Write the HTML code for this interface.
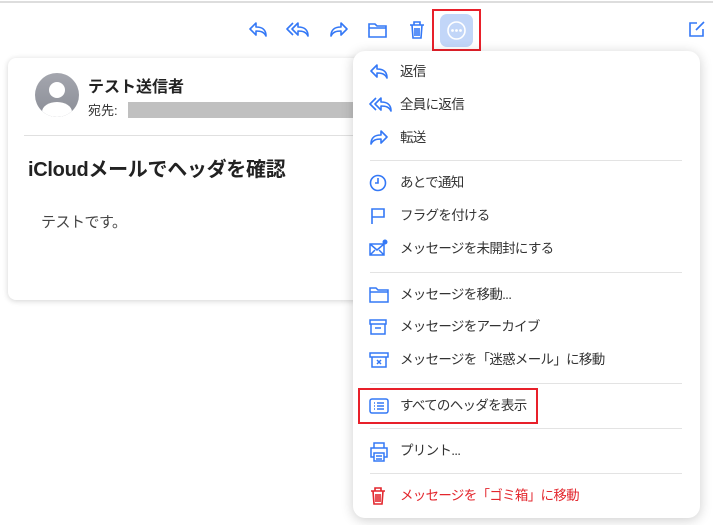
<!DOCTYPE html><html><head><meta charset="utf-8"><style>
body{margin:0;width:713px;height:525px;background:#fff;font-family:"Liberation Sans","Noto Sans CJK JP",sans-serif;position:relative;overflow:hidden;color:#222}
.a{position:absolute}
.ti{position:absolute;top:20px}
.card{left:8px;top:58px;width:370px;height:242px;background:#fff;border-radius:8px;box-shadow:0 1px 6px rgba(0,0,0,.18)}
.menu{left:353px;top:51px;width:347px;height:467px;background:#fff;border-radius:12px;box-shadow:0 2px 12px rgba(0,0,0,.2)}
.it{position:absolute;left:400px;font-size:13.5px;letter-spacing:-0.7px;color:#333;line-height:20px}
.ic{position:absolute;left:369px}
.sep{position:absolute;left:370px;width:312px;height:1px;background:#e3e3e3}
</style></head><body>
<div class="a" style="left:0;top:1px;width:713px;height:2px;background:#ddd"></div>
<svg class="ti" style="left:248px" width="20" height="20" viewBox="0 0 20 20" fill="none" stroke="#3478f6" stroke-width="1.6" stroke-linejoin="round"><path d="M8 3 2 9l6 6v-4c5 0 8 1 10 5 0-6-3-9-10-9z"/></svg>
<svg class="ti" style="left:286px" width="24" height="20" viewBox="0 0 24 20" fill="none" stroke="#3478f6" stroke-width="1.6" stroke-linejoin="round"><path d="M7 3 1 9l6 6"/><path d="M12 3 6 9l6 6v-4c5 0 8 1 10 5 0-6-3-9-10-9z"/></svg>
<svg class="ti" style="left:329px" width="20" height="20" viewBox="0 0 20 20" fill="none" stroke="#3478f6" stroke-width="1.6" stroke-linejoin="round"><path d="M12 3l6 6-6 6v-4c-5 0-8 1-10 5 0-6 3-9 10-9z"/></svg>
<svg class="ti" style="left:367px" width="21" height="20" viewBox="0 0 21 20" fill="none" stroke="#3478f6" stroke-width="1.6"><path d="M2 4h6l2 2h9v11H2z M2 8h17"/></svg>
<svg class="ti" style="left:408px" width="18" height="20" viewBox="0 0 18 20" fill="none" stroke="#3478f6" stroke-width="1.6"><path d="M2 5h14M6 5V2h6v3M4 5l1 13h8l1-13M7 8v8M9 8v8M11 8v8"/></svg>
<div class="a" style="left:432px;top:9px;width:45px;height:38px;border:2px solid #e8202a"></div>
<div class="a" style="left:440px;top:14px;width:33px;height:33px;background:#c2d6f8;border-radius:7px"></div>
<svg class="a" style="left:446px;top:20px" width="21" height="21" viewBox="0 0 21 21" fill="none" stroke="#fff" stroke-width="1.6"><circle cx="10.5" cy="10.5" r="8.5"/><circle cx="6.5" cy="10.5" r=".6" fill="#fff"/><circle cx="10.5" cy="10.5" r=".6" fill="#fff"/><circle cx="14.5" cy="10.5" r=".6" fill="#fff"/></svg>
<svg class="ti" style="left:688px" width="18" height="18" viewBox="0 0 18 18" fill="none" stroke="#3478f6" stroke-width="1.6"><path d="M9 3H2v13h13V9M8 10l8-8"/></svg>
<div class="a card">
<div class="a" style="left:27px;top:15px;width:44px;height:44px;border-radius:50%;background:linear-gradient(#a4a6ae,#8b8e97);overflow:hidden"><div class="a" style="left:14px;top:9px;width:16px;height:16px;border-radius:50%;background:#fff"></div><div class="a" style="left:7px;top:29px;width:30px;height:20px;border-radius:50%;background:#fff"></div></div>
<div class="a" style="left:80px;top:15px;font-size:16px;font-weight:bold;color:#222">テスト送信者</div>
<div class="a" style="left:80px;top:42px;font-size:13px;color:#333">宛先:</div>
<div class="a" style="left:120px;top:44px;width:250px;height:16px;background:#c0c0c0"></div>
<div class="a" style="left:16px;top:77px;width:354px;height:1px;background:#e0e0e0"></div>
<div class="a" style="left:20px;top:95px;font-size:20px;font-weight:bold;color:#222;letter-spacing:-0.3px">iCloudメールでヘッダを確認</div>
<div class="a" style="left:33px;top:153px;font-size:15px;color:#444;letter-spacing:-0.5px">テストです。</div>
</div>
<div class="a menu"></div>
<svg class="ic" style="top:63px" width="20" height="18" viewBox="0 0 20 18" fill="none" stroke="#3478f6" stroke-width="1.6" stroke-linejoin="round"><path d="M8 2 2 8l6 6v-4c5 0 8 1 10 5 0-6-3-9-10-9z"/></svg>
<div class="it" style="top:62px">返信</div>
<svg class="ic" style="top:96px" width="24" height="18" viewBox="0 0 24 18" fill="none" stroke="#3478f6" stroke-width="1.6" stroke-linejoin="round"><path d="M7 2 1 8l6 6"/><path d="M12 2 6 8l6 6v-4c5 0 8 1 10 5 0-6-3-9-10-9z"/></svg>
<div class="it" style="top:95px">全員に返信</div>
<svg class="ic" style="top:129px" width="20" height="18" viewBox="0 0 20 18" fill="none" stroke="#3478f6" stroke-width="1.6" stroke-linejoin="round"><path d="M12 2l6 6-6 6v-4c-5 0-8 1-10 5 0-6 3-9 10-9z"/></svg>
<div class="it" style="top:128px">転送</div>
<div class="sep" style="top:160px"></div>
<svg class="ic" style="top:174px" width="18" height="18" viewBox="0 0 18 18" fill="none" stroke="#3478f6" stroke-width="1.6"><circle cx="9" cy="9" r="7.5"/><path d="M9 4v5H6"/></svg>
<div class="it" style="top:173px">あとで通知</div>
<svg class="ic" style="top:207px" width="18" height="18" viewBox="0 0 18 18" fill="none" stroke="#3478f6" stroke-width="1.6"><path d="M3 17V2h12v8H3"/></svg>
<div class="it" style="top:206px">フラグを付ける</div>
<svg class="ic" style="top:239px" width="20" height="18" viewBox="0 0 20 18" fill="none" stroke="#3478f6" stroke-width="1.5"><path d="M1 5h14v11H1zM1 5l7 6 7-6M1 16l5-5M15 16l-5-5"/><circle cx="16" cy="3" r="2.5" fill="#3478f6" stroke="none"/></svg>
<div class="it" style="top:239px">メッセージを未開封にする</div>
<div class="sep" style="top:272px"></div>
<svg class="ic" style="top:286px" width="20" height="18" viewBox="0 0 20 18" fill="none" stroke="#3478f6" stroke-width="1.5"><path d="M1 2h6l2 2h10v12H1zM1 6h18"/></svg>
<div class="it" style="top:285px">メッセージを移動...</div>
<svg class="ic" style="top:318px" width="18" height="18" viewBox="0 0 18 18" fill="none" stroke="#3478f6" stroke-width="1.5"><path d="M1 2h16v4H1zM2 6v10h14V6M6 10h6"/></svg>
<div class="it" style="top:317px">メッセージをアーカイブ</div>
<svg class="ic" style="top:351px" width="20" height="18" viewBox="0 0 20 18" fill="none" stroke="#3478f6" stroke-width="1.5"><path d="M1 2h18v4H1zM3 6v10h14V6M8 9l4 4M12 9l-4 4"/></svg>
<div class="it" style="top:350px">メッセージを「迷惑メール」に移動</div>
<div class="sep" style="top:383px"></div>
<div class="a" style="left:358px;top:388px;width:176px;height:32px;border:2px solid #e8202a"></div>
<svg class="ic" style="top:398px" width="20" height="16" viewBox="0 0 20 16" fill="none" stroke="#3478f6" stroke-width="1.5"><rect x="1" y="1" width="18" height="14" rx="2"/><path d="M5 5h1M8 5h7M5 8h1M8 8h7M5 11h1M8 11h7"/></svg>
<div class="it" style="top:396px">すべてのヘッダを表示</div>
<div class="sep" style="top:428px"></div>
<svg class="ic" style="top:442px" width="20" height="20" viewBox="0 0 20 20" fill="none" stroke="#3478f6" stroke-width="1.5"><path d="M5 6V1h10v5M5 15H2V6h16v9h-3M5 11h10v8H5zM7 14h6M7 17h6"/></svg>
<div class="it" style="top:441px">プリント...</div>
<div class="sep" style="top:473px"></div>
<svg class="ic" style="top:486px" width="18" height="20" viewBox="0 0 18 20" fill="none" stroke="#e3262d" stroke-width="1.6"><path d="M2 5h14M6 5V2h6v3M4 5l1 13h8l1-13M7 8v8M9 8v8M11 8v8"/></svg>
<div class="it" style="top:486px;color:#e3262d">メッセージを「ゴミ箱」に移動</div>
</body></html>
